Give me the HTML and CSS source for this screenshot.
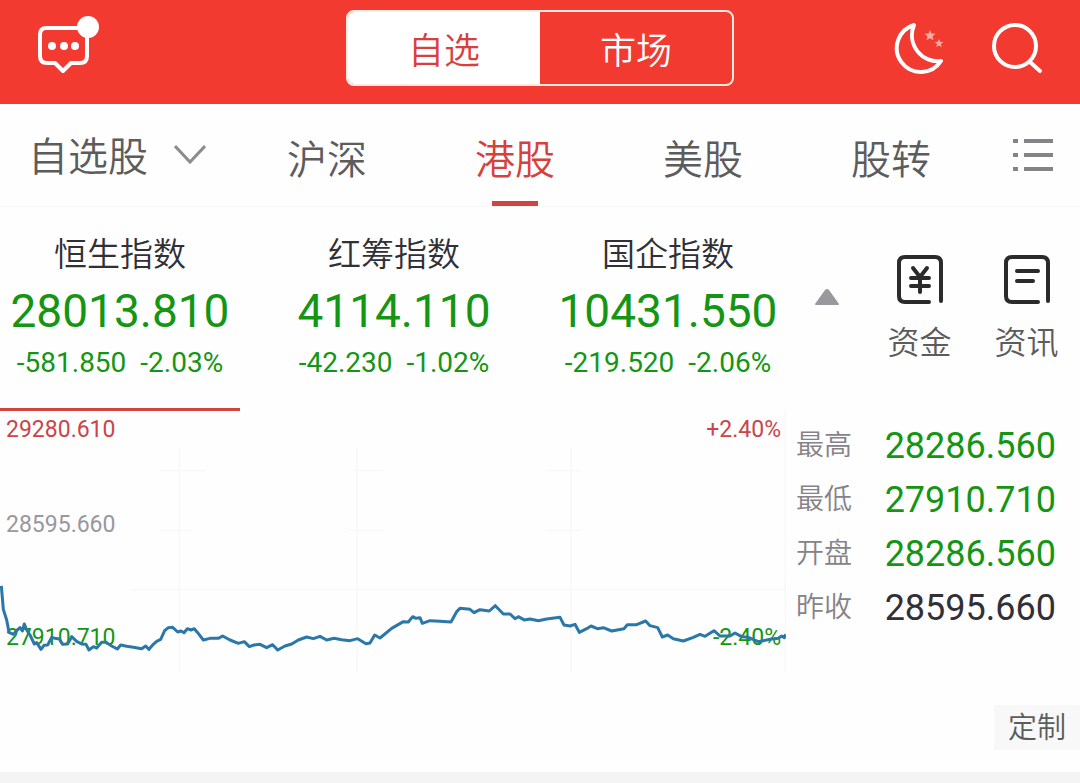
FILE: index.html
```html
<!DOCTYPE html>
<html lang="zh-CN">
<head>
    <meta charset="UTF-8">
    <meta name="viewport" content="width=device-width, initial-scale=1.0">
    <title>自选 - 港股</title>
    <link rel="stylesheet" href="styles.css">
</head>
<body>
    <header class="topbar">
        <button type="button" class="icon-btn" aria-label="消息">
            <svg width="64" height="66" viewBox="0 0 64 66" fill="none">
                <path d="M10 13 H44 Q51 13 51 20 V41 Q51 48 44 48 H35 L27 56 L19 48 H11 Q4 48 4 41 V20 Q4 13 10 13 Z" stroke="#fff" stroke-width="4" stroke-linejoin="round"/>
                <circle cx="16" cy="31" r="4" fill="#fff"/>
                <circle cx="28" cy="31" r="4" fill="#fff"/>
                <circle cx="39" cy="31" r="4" fill="#fff"/>
                <circle cx="52" cy="12" r="11" fill="#fff"/>
            </svg>
        </button>
        <div class="switch">
            <button type="button" class="switch-btn active">自选</button>
            <button type="button" class="switch-btn">市场</button>
        </div>
        <div class="topbar-right">
            <button type="button" class="icon-btn" aria-label="夜间模式">
                <svg width="54" height="56" viewBox="0 0 54 56" fill="none">
                    <path d="M22 5 A24 24 0 1 0 49 41 C31 44 14 25 22 5 Z" stroke="#fff" stroke-width="4" stroke-linejoin="round"/>
                    <path d="M38 10 l1.500 3.500 4 .3 -3 2.500 1 4 -3.500 -2 -3.500 2 1 -4 -3 -2.500 4 -.3 Z" fill="#ffaaa0"/>
                    <path d="M47 19 l1.200 2.800 3.200 .3 -2.500 2 .8 3.100 -2.700 -1.600 -2.700 1.600 .8 -3.100 -2.500 -2 3.200 -.3 Z" fill="#ffaaa0"/>
                </svg>
            </button>
            <button type="button" class="icon-btn" aria-label="搜索">
                <svg width="54" height="56" viewBox="0 0 54 56" fill="none" stroke="#fff" stroke-width="4" stroke-linecap="round">
                    <circle cx="25" cy="26" r="21"/>
                    <path d="M40 42 L50 51"/>
                </svg>
            </button>
        </div>
    </header>

    <nav class="tabs">
        <button type="button" class="group-btn">自选股
            <svg width="32" height="22" viewBox="0 0 32 22" fill="none" stroke="#8c8c8c" stroke-width="3">
                <path d="M1 3 L16 19 L31 3"/>
            </svg>
        </button>
        <a href="#" class="tab">沪深</a>
        <a href="#" class="tab active">港股</a>
        <a href="#" class="tab">美股</a>
        <a href="#" class="tab">股转</a>
        <button type="button" class="icon-btn menu-btn" aria-label="列表">
            <svg width="40" height="34" viewBox="0 0 40 34" stroke="#848488" stroke-width="4">
                <path d="M0 3 H5 M11 3 H40 M0 17 H5 M11 17 H40 M0 31 H5 M11 31 H40"/>
            </svg>
        </button>
    </nav>

    <section class="summary">
        <div class="indexes">
            <a href="#" class="index active">
                <span class="index-name">恒生指数</span>
                <span class="index-value">28013.810</span>
                <span class="index-change"><span>-581.850</span><span>-2.03%</span></span>
            </a>
            <a href="#" class="index">
                <span class="index-name">红筹指数</span>
                <span class="index-value">4114.110</span>
                <span class="index-change"><span>-42.230</span><span>-1.02%</span></span>
            </a>
            <a href="#" class="index">
                <span class="index-name">国企指数</span>
                <span class="index-value">10431.550</span>
                <span class="index-change"><span>-219.520</span><span>-2.06%</span></span>
            </a>
        </div>
        <div class="shortcuts">
            <button type="button" class="icon-btn fold-btn" aria-label="收起">
                <svg width="26" height="18" viewBox="0 0 26 18">
                    <path d="M11 2 Q13 0 15 2 L25 16 Q25 17 24 17 H2 Q1 17 1 16 Z" fill="#98989d"/>
                </svg>
            </button>
            <a href="#" class="shortcut">
                <svg width="46" height="50" viewBox="0 0 46 50" fill="none" stroke="#2b2b2b" stroke-width="4" stroke-linecap="round">
                    <path d="M32 47 H8 Q2 47 2 41 V8 Q2 2 8 2 H38 Q44 2 44 8 V46"/>
                    <path d="M16 13 L23 22 L30 13 M23 22 V37 M14 23 H32 M14 31 H32"/>
                </svg>
                <span>资金</span>
            </a>
            <a href="#" class="shortcut">
                <svg width="46" height="50" viewBox="0 0 46 50" fill="none" stroke="#2b2b2b" stroke-width="4" stroke-linecap="round">
                    <path d="M34 47 H8 Q2 47 2 41 V8 Q2 2 8 2 H38 Q44 2 44 8 V46"/>
                    <path d="M13 16 H34 M13 26 H29"/>
                </svg>
                <span>资讯</span>
            </a>
        </div>
    </section>

    <section class="detail">
        <div class="chart">
            <span class="chart-label top-left">29280.610</span>
            <span class="chart-label mid-left">28595.660</span>
            <span class="chart-label low-left">27910.710</span>
            <span class="chart-label top-right">+2.40%</span>
            <span class="chart-label low-right">-2.40%</span>
            <svg class="chart-svg" viewBox="0 33 2358 828" fill="none">
                <path stroke="#f7f7f7" stroke-width="4" d="M538 145 V815 M1071 145 V815 M1713 145 V815 M2356 33 V815 M480 212 H620 M1060 212 H1150 M1640 212 H1740 M480 391 H575 M1050 391 H1150 M1640 391 H1740 M400 569 H2356"/>
                <polyline stroke="#2a77a8" stroke-width="9" stroke-linejoin="round" points="4,558 10,628 20,660 27,697 40,703 52,690 60,683 67,693 73,672 80,690 90,705 103,732 110,728 123,748 132,736 143,735 155,712 165,715 178,717 188,733 203,732 215,710 230,724 245,732 258,733 267,750 280,740 290,744 305,727 318,727 335,738 352,747 362,735 380,739 400,742 425,746 437,738 447,748 460,733 470,724 482,718 494,692 505,683 518,682 533,696 543,693 552,698 562,686 573,690 583,686 593,698 610,720 630,715 655,715 668,708 690,720 715,730 733,725 748,740 762,735 780,733 800,743 818,734 833,750 855,738 875,732 895,720 920,711 940,716 960,709 980,720 1002,715 1025,719 1050,722 1073,716 1098,731 1110,729 1124,705 1140,714 1175,685 1210,665 1225,666 1238,650 1248,655 1260,653 1267,670 1290,662 1320,664 1353,666 1370,635 1380,625 1410,628 1422,638 1440,629 1468,633 1486,617 1510,642 1530,642 1545,656 1555,650 1570,658 1572,660 1590,657 1615,662 1640,657 1680,652 1692,675 1710,678 1725,673 1738,697 1760,686 1773,678 1792,686 1810,683 1835,693 1872,686 1882,674 1910,674 1937,663 1950,677 1973,683 1987,711 2003,705 2020,716 2050,723 2080,712 2100,703 2115,709 2142,692 2160,708 2190,708 2205,699 2225,710 2245,712 2275,725 2310,718 2335,715 2345,708 2353,713 2357,703"/>
            </svg>
        </div>
        <dl class="stats">
            <div class="stat"><dt>最高</dt><dd>28286.560</dd></div>
            <div class="stat"><dt>最低</dt><dd>27910.710</dd></div>
            <div class="stat"><dt>开盘</dt><dd>28286.560</dd></div>
            <div class="stat"><dt>昨收</dt><dd class="flat">28595.660</dd></div>
        </dl>
    </section>

    <div class="custom-row">
        <button type="button" class="custom-btn">定制</button>
    </div>
    <div class="divider"></div>
</body>
</html>
```
FILE: styles.css
```css
* {
    box-sizing: border-box;
}
html {
    background-color: #f4f4f4;
}
body {
    margin: 0;
    background-color: #fefefe;
    color: #303036;
    font-family: Roboto, "Noto Sans CJK SC", sans-serif;
}
button {
    margin: 0;
    padding: 0;
    border: 0;
    background: none;
    font-family: inherit;
    cursor: pointer;
}
a {
    color: inherit;
    text-decoration: none;
}
svg {
    display: block;
}
.icon-btn {
    display: flex;
}

/* red top bar */
.topbar {
    display: grid;
    grid-template-columns: 1fr 388px 1fr;
    align-items: center;
    padding: 10px 36px 18px;
    background-color: #f23a31;
}
.switch {
    display: grid;
    grid-template-columns: 1fr 1fr;
    height: 76px;
    border: 2px solid #ffe9e0;
    border-radius: 8px;
    overflow: hidden;
}
.switch-btn {
    color: #ffffff;
    font-size: 36px;
    font-weight: 350;
}
.switch-btn.active {
    background-color: #ffffff;
    color: #d8403c;
}
.topbar-right {
    display: flex;
    justify-content: flex-end;
    gap: 44px;
}

/* market tabs */
.tabs {
    display: grid;
    grid-template-columns: 233fr 188fr 188fr 188fr 188fr 95fr;
    height: 103px;
    border-bottom: 1px solid #f7f7f7;
    color: #5c5c5c;
    font-size: 40px;
    font-weight: 350;
    line-height: 60px;
}
.group-btn {
    display: flex;
    align-items: center;
    gap: 26px;
    padding: 0 0 2px 28px;
    color: inherit;
    font-size: 40px;
    font-weight: 350;
    white-space: nowrap;
}
.tab {
    display: flex;
    flex-direction: column;
    align-items: center;
    justify-content: space-between;
    padding-top: 27px;
}
.tab::after {
    content: "";
    width: 46px;
    height: 5px;
}
.tab.active {
    color: #d8403c;
}
.tab.active::after {
    background-color: #d0453f;
}
.menu-btn {
    align-items: center;
    justify-content: center;
}

/* index figures */
.summary {
    display: grid;
    grid-template-columns: 788fr 292fr;
}
.indexes {
    display: grid;
    grid-template-columns: 1fr 1fr 1fr;
    column-gap: 34px;
}
.index {
    display: flex;
    flex-direction: column;
    align-items: center;
    padding: 28px 0 25px;
    border-bottom: 3px solid transparent;
    color: #149614;
    white-space: nowrap;
}
.index.active {
    border-bottom-color: #d0453f;
}
.index-name {
    color: #303036;
    font-size: 33px;
    font-weight: 350;
    line-height: 40px;
}
.index-value {
    margin-top: 6px;
    font-size: 46px;
    line-height: 60px;
}
.index-change {
    display: flex;
    gap: 14px;
    padding-top: 2px;
    font-size: 28px;
    line-height: 40px;
}
.shortcuts {
    display: grid;
    grid-template-columns: 78fr 107fr 107fr;
}
.fold-btn {
    align-items: center;
    justify-content: center;
    padding-bottom: 24px;
}
.shortcut {
    display: flex;
    flex-direction: column;
    align-items: center;
    gap: 18px;
    padding-top: 48px;
    color: #5c5c5c;
    font-size: 32px;
    font-weight: 350;
    line-height: 40px;
}

/* chart and day figures */
.detail {
    display: grid;
    grid-template-columns: 786fr 294fr;
}
.chart {
    position: relative;
}
.chart-svg {
    position: relative;
    width: 100%;
}
.chart-label {
    position: absolute;
    font-size: 23px;
    line-height: 28px;
}
.top-left {
    top: 5px;
    left: 6px;
    color: #c9454b;
}
.mid-left {
    top: 100px;
    left: 6px;
    color: #98989d;
}
.low-left {
    top: 213px;
    left: 6px;
    color: #149614;
}
.top-right {
    top: 5px;
    right: 5px;
    color: #c9454b;
}
.low-right {
    top: 213px;
    right: 5px;
    color: #149614;
}
.stats {
    margin: 0;
    padding: 8px 24px 0 10px;
}
.stat {
    display: flex;
    align-items: center;
    justify-content: space-between;
    line-height: 54px;
}
.stat dt {
    color: #858389;
    font-size: 28px;
    font-weight: 350;
}
.stat dd {
    margin: 0;
    color: #149614;
    font-size: 36px;
}
.stat dd.flat {
    color: #303036;
}
.custom-row {
    display: flex;
    justify-content: flex-end;
    padding: 18px 0 22px;
}
.custom-btn {
    padding: 1px 14px 0;
    background-color: #f8f8f8;
    color: #5c5c5c;
    font-size: 29px;
    font-weight: 350;
    line-height: 44px;
}
.divider {
    height: 12px;
    background-color: #f4f4f4;
}
```
